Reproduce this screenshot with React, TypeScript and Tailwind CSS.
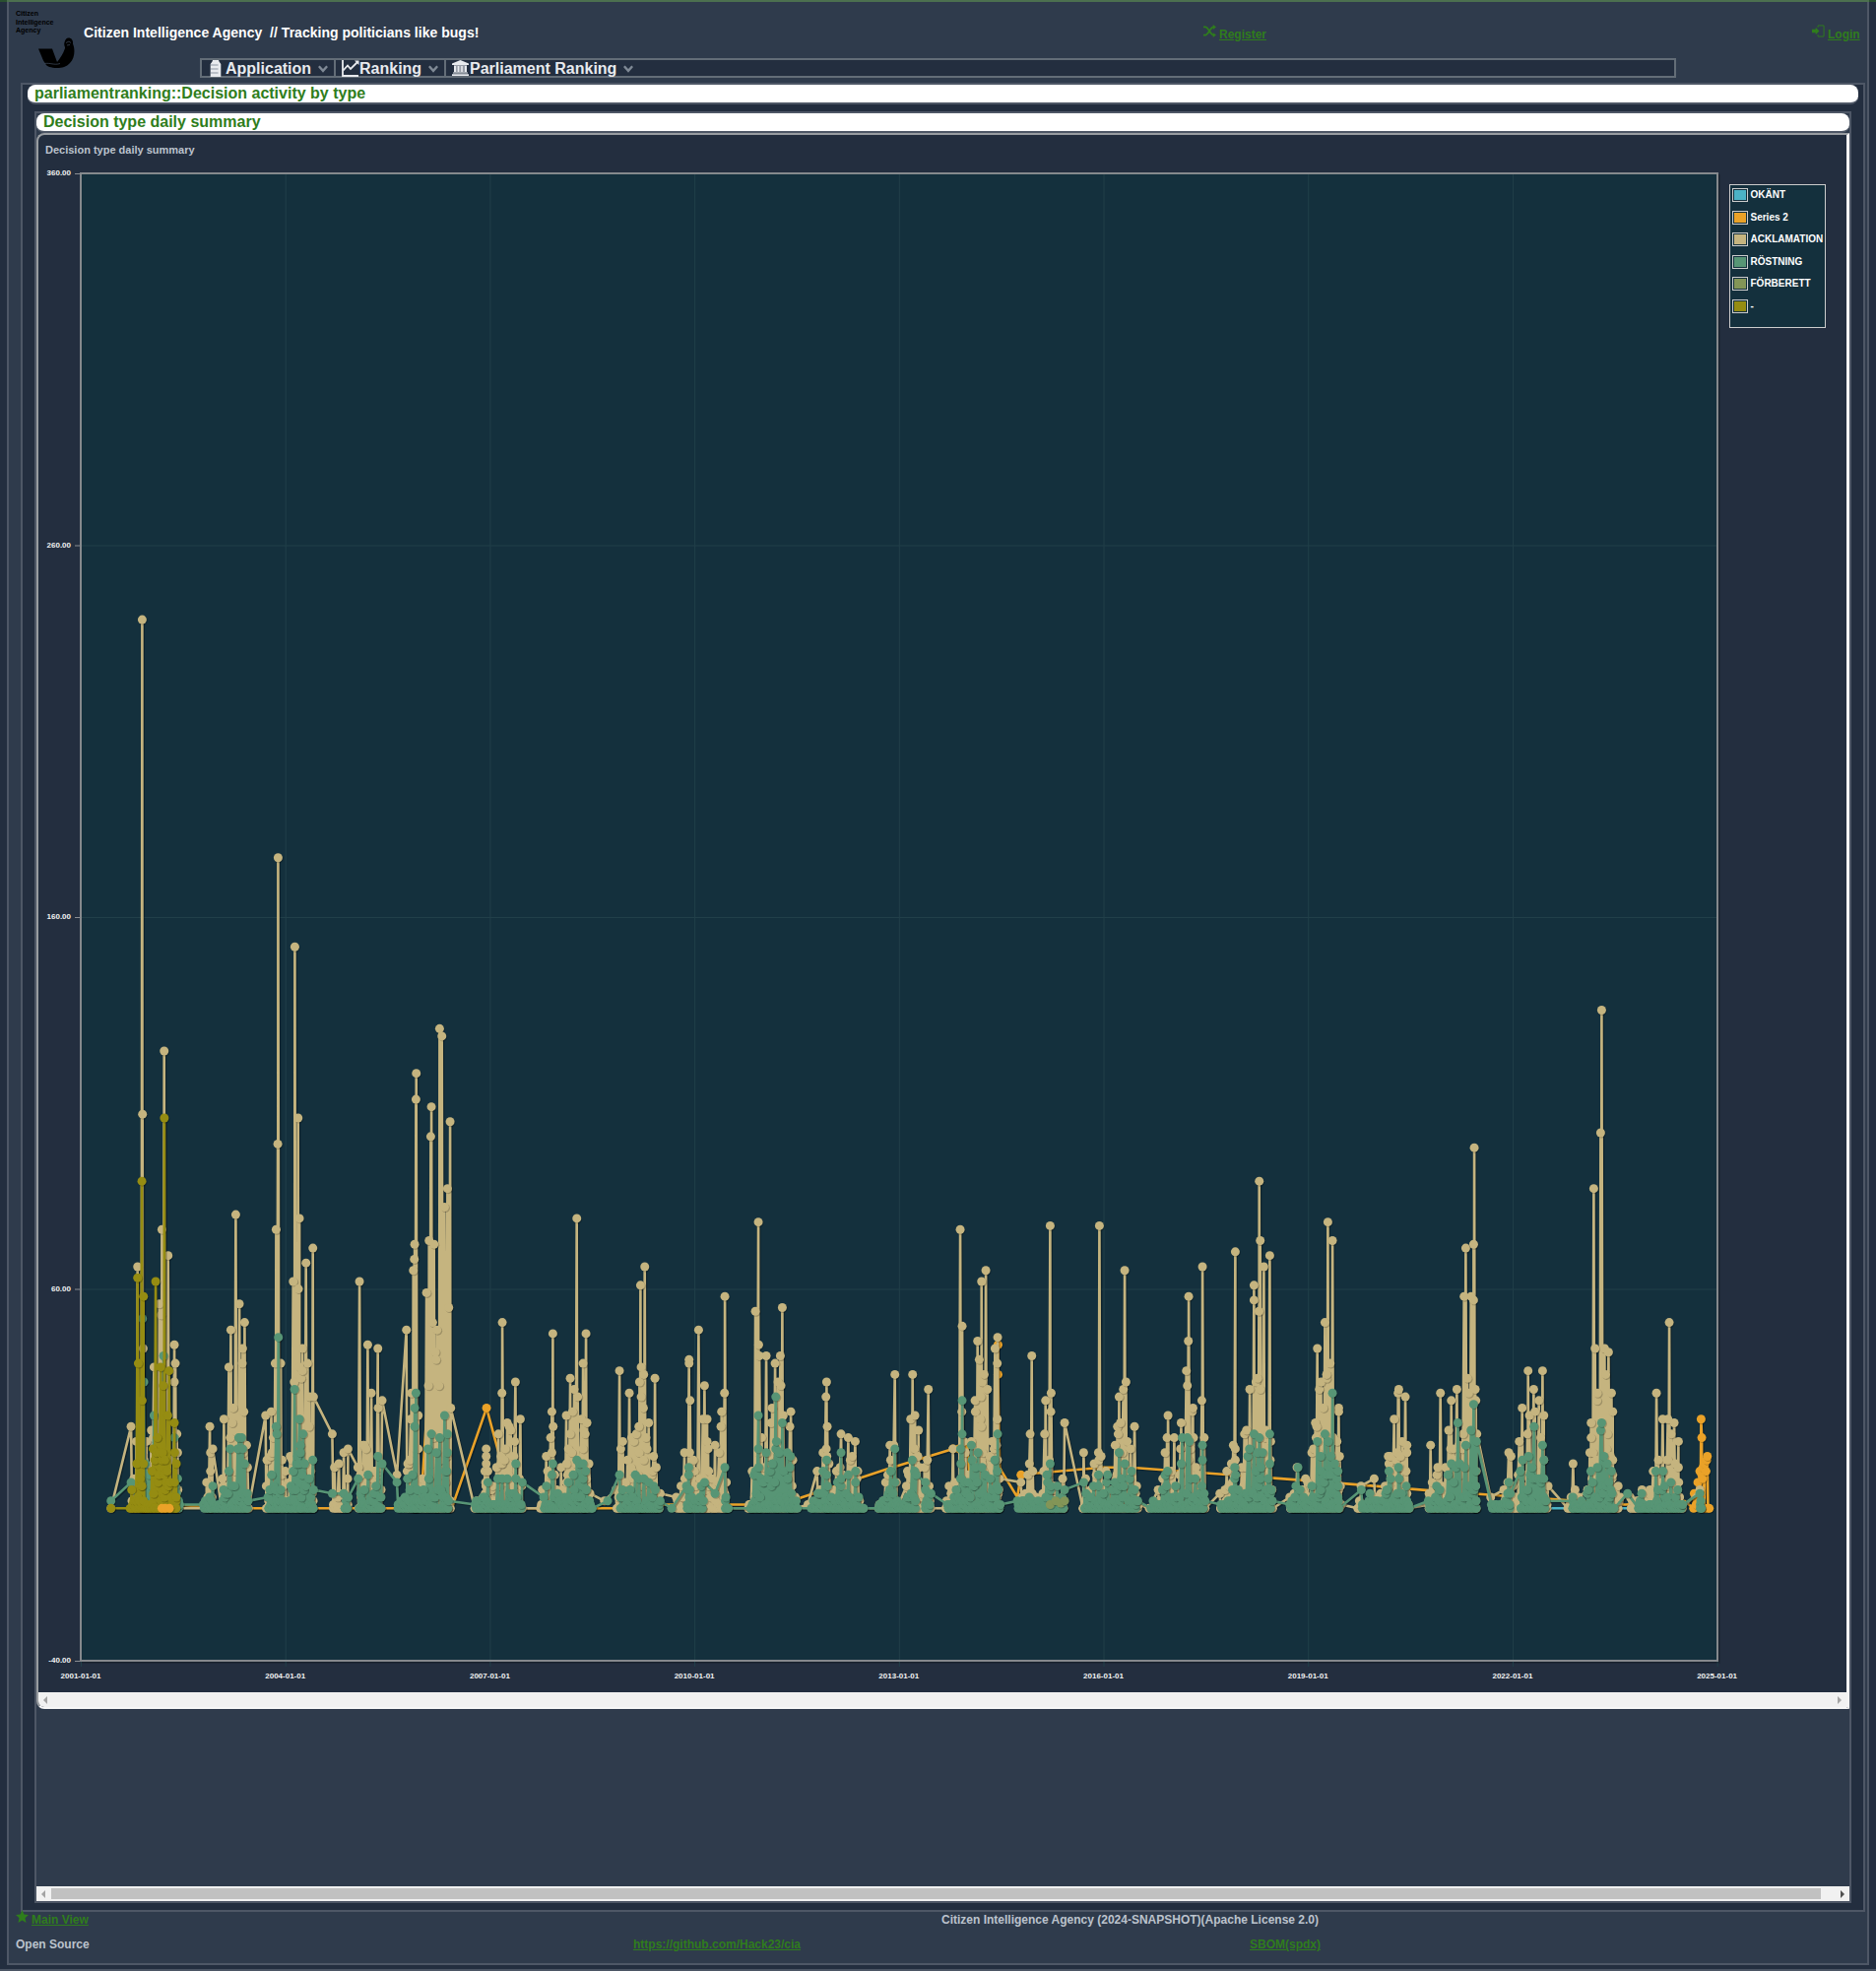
import React from "react";

type Point = [number, number];

// Points are "x,value" pairs; x is measured in thirds of a pixel from the block's offset.
const read = (blocks: [number, string][]): Point[] =>
  blocks
    .flatMap(([offset, text]) =>
      text
        .trim()
        .split(/\s+/)
        .map((pair): Point => {
          const [x, v] = pair.split(",").map(Number);
          return [offset + x, v];
        })
    )
    .sort((a, b) => a[0] - b[0]);

const acclamation = read([
  [0, "97,1 158,23 172,1 178,66 186,1 192,240 193,107 195,44 205,19 212,1 220,22 228,39 244,56 250,53 252,76 259,124 265,1 271,69 280,1 290,45 293,40 290,35 298,21 300,16 302,1 385,1 398,23 400,16 407,17 400,11 434,1 441,25 456,39 462,49 469,28 466,24 477,80 488,56 497,40 498,44 502,27 504,51 516,1 568,26 574,1 585,27 583,15 597,40 600,76 606,176 605,99 614,40 618,14 628,11 636,1 643,15 652,62 655,35 657,152 667,106 668,60 671,79 672,39 676,36 680,44 680,38 691,67 696,40 700,23 702,31 708,1 712,71 714,31 771,21 791,13 800,1 806,16 819,17 818,9 849,12 854,62 868,18 879,45 890,32 898,1 910,44 911,28 923,30 968,10 997,49 1001,13 1010,25 1012,32 1018,65 1021,68 1022,72 1026,111 1027,118 1033,26 1033,17 1048,1 1058,59 1064,34 1066,73 1071,101 1073,109 1077,51 1081,72 1085,43 1087,41 1090,49 1096,34 1098,130 1105,128 1113,82 1122,87 1126,55 1130,105 1132,28"],
  [1200, "5,1 22,1 40,17 40,15 40,13 36,11 45,11 38,8 66,1 77,21 88,32 89,51 85,15 85,13 98,17 104,24 110,23 115,22 122,1 129,35 136,1 144,25 150,1 205,1 223,15 227,11 236,20 240,27 243,48 244,23 240,16 249,10 258,1 284,26 285,13 296,36 296,21 303,27 308,33 316,79 319,31 330,25 335,40 337,22 335,17 344,48 347,24 356,5 400,3 435,6 446,38 450,17 456,19 465,8 476,32 483,20 490,19 497,21 505,23 506,16 507,35 510,61 512,39 512,31 519,28 520,37 523,66 527,20 530,17 535,24 550,15 554,36 558,12 570,5 619,4 644,16 645,9 658,41 658,40 661,30 660,16 668,1 687,49 700,25 705,34 713,25 713,19 716,17 718,11 727,9 737,18 740,7 749,16 755,23 757,27 766,32 767,58 774,1 838,1 850,11 860,54 869,78 870,45 872,42 893,42 908,24 911,28 920,40 929,35 938,34 936,42 942,55 945,26 965,23 968,27 974,14 984,1 1020,2 1048,11 1066,16 1075,31 1077,35 1079,23 1076,17 1090,1 1107,11 1121,21 1132,1 1143,20 1149,14 1155,15 1164,19 1172,11 1180,1"],
  [2400, "35,1 50,3 70,18 72,14 85,37 92,1 120,7 133,25 139,37 146,26 157,22 145,17 155,15 160,12 172,1 187,33 194,1 240,1 250,7 262,17 273,1 284,76 290,50 289,27 300,16 318,19 329,30 330,27 337,46 342,41 345,25 347,31 348,23 349,62 351,35 357,37 362,65 367,33 375,15 381,19 390,44 397,40 398,47 397,25 404,9 469,8 490,10 497,21 502,42 505,11 515,4 533,1 541,21 544,30 558,77 561,32 560,27 570,7 590,1 602,24 658,1 660,16 672,1 692,13 705,16 708,77 716,1 728,11 745,1 756,18 763,23 765,21 768,31 772,24 781,33 785,65 789,35 793,19 803,17 815,23 828,2 860,1 887,6 908,16 914,20 917,26 925,1 936,20 940,7 957,24 955,17 973,38 976,34 979,46 980,58 991,27 993,28 995,20 1002,12 1020,30 1022,66 1030,1 1075,5 1085,1 1096,11 1110,13 1122,70 1122,17 1122,14 1136,1 1150,21 1156,22 1166,33 1179,61 1179,57 1185,35 1190,36 1194,54 1195,89 1198,33 1198,73 1209,66 1215,22 1227,69 1230,19 1236,1"],
  [3600, "88,4 98,1 110,12 120,1 136,9 155,16 160,17 166,24 172,44 178,33 183,35 190,28 195,51 200,36 200,37 204,78 211,40 218,73 232,19 237,28 237,27 245,2 295,1 305,7 345,9 365,5 388,15 394,15 390,13 406,25 415,16 418,32 420,33 430,19 440,31 445,18 445,16 452,1 510,2 517,18 524,1 536,10 547,32 556,1 572,22 578,17 580,30 589,1 597,33 610,1 619,58 624,71 629,36 633,32 640,58 648,57 648,72 650,98 653,33 655,30 658,21 700,4 740,6 755,16 762,15 774,1 787,19 796,28 806,1 814,38 812,21 818,26 831,33 835,27 847,30 852,20 858,38 862,26 862,14 875,7 935,1 951,13 960,1 968,4 995,6 1002,16 1006,24 1006,20 1014,87 1018,44 1025,32 1024,30 1035,102 1038,135 1047,44 1050,37 1059,43 1068,32 1072,27 1072,14 1095,4 1125,4 1140,1 1161,6 1172,1 1195,11 1205,32 1214,1 1224,25 1232,1 1240,25 1244,51 1240,14 1250,21 1259,24 1272,19 1272,12 1273,8 1284,1 1337,6"],
]);

const vote = read([
  [0, "97,3 158,8 186,1 193,52 197,35 205,1 228,26 240,8 257,42 275,8 290,20 300,9 306,2 378,2 390,1 407,7 412,1 432,1 440,6 456,11 460,17 466,7 486,20 495,20 483,17 498,17 504,13 515,3 575,4 586,10 600,23 602,21 607,47 614,6 640,3 645,7 652,11 656,33 671,25 682,21 674,18 674,16 665,15 687,13 700,9 712,14 714,6 771,5 806,5 820,4 850,9 868,6 880,10 898,5 910,15 923,13 968,8 985,1 1000,9 1015,10 1022,28 1026,32 1022,23 1030,6 1046,5 1062,17 1073,21 1098,20 1088,16 1113,26 1122,21 1122,16 1115,11 1125,3 1206,2"],
  [1200, "20,2 45,8 56,1 75,9 88,9 104,9 118,4 130,13 130,9 150,8 215,4 223,7 243,13 240,10 265,3 290,8 305,10 316,14 325,13 335,13 343,11 335,9 345,6 355,3 363,1 410,3 446,10 455,6 470,4 494,10 505,9 520,9 535,8 550,7 555,6 570,3 605,1 650,7 657,12 657,10 660,6 670,2 705,8 695,7 737,5 767,12 770,4 778,1 845,1 856,10 860,11 869,26 869,17 870,12 893,16 905,11 922,31 924,19 922,17 932,16 942,24 957,16 967,15 965,12 958,9 970,5 988,1 1030,1 1050,5 1066,11 1077,14 1077,10 1080,7 1095,1 1110,8 1121,16 1121,9 1143,10 1165,11 1165,8 1175,4 1190,1"],
  [2400, "35,1 55,2 72,11 85,17 85,8 80,5 100,1 120,3 138,14 145,11 150,10 178,8 178,6 195,5 245,2 265,4 285,17 290,30 290,21 286,13 285,9 300,3 318,18 338,16 320,14 330,12 350,12 360,10 375,9 389,14 398,21 397,11 395,7 400,6 406,2 458,3 469,2 494,4 515,2 535,1 548,10 558,13 550,8 560,7 580,7 602,6 660,8 685,1 690,7 705,10 705,7 733,10 730,8 755,8 768,16 785,13 775,9 806,11 800,9 815,6 825,3 865,1 885,2 908,10 915,11 912,7 940,7 957,13 960,20 976,20 982,19 985,9 1000,9 1022,18 1022,14 1020,7 1030,3 1078,2 1100,3 1120,12 1120,9 1123,10 1138,3 1160,15 1165,17 1179,21 1195,20 1190,16 1205,16 1200,12 1227,21 1227,13 1222,9 1235,3"],
  [3600, "88,2 100,1 113,12 119,6 130,4 140,1 155,7 172,19 182,15 183,11 195,21 205,19 200,10 213,15 218,32 235,11 235,7 238,1 306,6 315,1 332,5 350,3 370,3 390,11 395,9 419,12 421,9 415,5 443,7 445,3 452,1 510,3 535,7 545,6 570,10 580,13 600,24 605,13 624,18 620,12 640,22 648,29 657,19 655,11 655,7 702,2 720,1 745,3 755,8 760,5 790,11 797,14 815,15 832,23 820,10 847,9 858,18 862,14 862,9 868,3 950,3 950,4 970,2 990,1 1005,11 1010,8 1025,12 1035,22 1038,24 1045,15 1055,13 1068,11 1060,8 1070,5 1076,1 1117,5 1150,1 1160,5 1155,3 1172,1 1195,1 1203,11 1215,1 1225,11 1230,7 1249,8 1270,6 1285,2 1337,5 1340,3 1342,1"],
]);

const unnamed = read([
  [0, "97,1 155,1 160,6 170,1 178,63 180,40 186,9 191,89 192,30 196,58 196,13 201,1 215,2 222,11 225,17 228,1 233,62 238,20 240,8 248,39 252,14 254,16 256,34 258,10 259.5,106 262,6 270,26 274,38 280,4 290,24 291,16 296,13 295,3"],
]);

const seriesTwo: Point[] = read([
  [0, "245,1 262,1 275,1 300,2 420,1 1040,1 1068,39 1090,22 1120,1 1135,1 1241,28"],
  [1200, "90,12 120,1 440,1 570,2 850,2 985,3.5 1258,11.5"],
  [2400, "262,17 280,17 305,18 318,1 390,1 399,45 399,37 404,12 410,11 458,4 469,10 520,10.5 720,12 800,12 1260,9"],
  [3600, "150,8.4 530,5.7 880,3.5 1110,2 1290,3 1318,1 1320,5 1326,2 1331,8 1335,4 1337,11 1339,1 1341,25 1343,20 1345,9 1347,12 1343,10 1351,1 1352,13 1356,11 1358,14 1360,15 1362,1 1366,1"],
]);

const prepared: Point[] = [[2958, 2], [2975, 3], [2990, 2.4], [3002, 3]];
const unknown: Point[] = [[4425, 1], [4730, 1]];

function densify(points: Point[], step: number, ratio: number, cap: number, maxGap: number, seed: number): Point[] {
  let s = seed;
  const rnd = () => {
    s = (s * 1103515245 + 12345) % 2147483648;
    return s / 2147483648;
  };
  const out: Point[] = [];
  points.forEach((p, i) => {
    out.push(p);
    const next = points[i + 1];
    if (!next) return;
    const gap = next[0] - p[0];
    if (gap > maxGap) return;
    const n = Math.max(1, Math.round(gap / step));
    const top = Math.max(2, Math.min(cap, Math.max(p[1], next[1]) * ratio));
    for (let k = 1; k <= n; k++) {
      const x = p[0] + (gap * k) / (n + 1);
      out.push([x, k % 2 ? 1 : Math.round(1 + rnd() * top)]);
      if (k % 2) out.push([x, Math.round(1 + rnd() * rnd() * top)]);
    }
  });
  return out;
}

const px = (x: number) => 80.4 + x / 3 - 39;
const py = (v: number) => 1535.1 - v * 3.775 - 137;

function Series({ points, color, marks }: { points: Point[]; color: string; marks?: Point[] }) {
  const d = points.map(([x, v]) => `${px(x).toFixed(1)},${py(v).toFixed(1)}`).join(" ");
  return (
    <g>
      <polyline points={d} fill="none" stroke="#000" strokeOpacity="0.28" strokeWidth="2.5" strokeLinejoin="round" transform="translate(1.3 1.3)" />
      <polyline points={d} fill="none" stroke={color} strokeWidth="2.6" strokeLinejoin="round" />
      {(marks ?? points).map(([x, v], i) => (
        <g key={i}>
          <circle cx={px(x) + 1} cy={py(v) + 1} r="4.5" fill="#000" fillOpacity="0.2" />
          <circle cx={px(x)} cy={py(v)} r="4.5" fill={color} />
        </g>
      ))}
    </g>
  );
}

const years = ["2001", "2004", "2007", "2010", "2013", "2016", "2019", "2022", "2025"];
const levels = ["360.00", "260.00", "160.00", "60.00", "-40.00"];

function Chart() {
  return (
    <svg width="1836" height="1581" className="block" fontFamily="Liberation Sans, Arial, sans-serif" fontWeight="bold" fontSize="8">
      <rect x="44" y="40" width="1664" height="1512" fill="#000" fillOpacity="0.12" />
      <rect x="43" y="40" width="1664" height="1511" fill="#000" fillOpacity="0.15" />
      <rect x="43" y="39" width="1662" height="1510" fill="#14303d" />
      {years.map((y, i) => {
        const x = 43.5 + i * 207.7;
        return (
          <g key={y}>
            <line x1={x} x2={x} y1="40" y2="1555" stroke="#213f49" />
            <text x={x - 0.5} y="1567" fill="#f2f2f2" textAnchor="middle">{y}-01-01</text>
          </g>
        );
      })}
      {levels.map((l, i) => {
        const y = 39 + i * 377.5;
        return (
          <g key={l}>
            <line x1="43" x2="1705" y1={y + 0.5} y2={y + 0.5} stroke="#213f49" />
            <line x1="37" x2="43" y1={y + 0.5} y2={y + 0.5} stroke="#8b8e93" />
            <text x="33" y={y + 2} fill="#f2f2f2" textAnchor="end">{l}</text>
          </g>
        );
      })}
      <rect x="43" y="39" width="1662" height="1510" fill="none" stroke="#85898d" strokeWidth="2" />
      <Series points={unknown} color="#4bb2c5" />
      <Series points={seriesTwo} color="#eaa228" marks={seriesTwo.filter(([x, v]) => x > 4910 || v >= 17 || (x < 300 && v < 2) || x === 2869)} />
      <Series points={densify(acclamation, 4, 0.55, 22, 26, 7)} color="#c5b47f" />
      <Series points={densify(vote, 4.4, 0.5, 13, 26, 21)} color="#579575" />
      <Series points={prepared} color="#839557" />
      <Series points={densify(unnamed, 5, 0.45, 30, 16, 5)} color="#958c12" />
      <Series points={[[252, 1], [262, 1], [275, 1]]} color="#eaa228" />
    </svg>
  );
}

const legend: [string, string][] = [
  ["OKÄNT", "bg-[#4bb2c5]"],
  ["Series 2", "bg-[#eaa228]"],
  ["ACKLAMATION", "bg-[#c5b47f]"],
  ["RÖSTNING", "bg-[#579575]"],
  ["FÖRBERETT", "bg-[#839557]"],
  ["-", "bg-[#958c12]"],
];

function Legend() {
  return (
    <div className="absolute left-[1717px] top-[50px] h-[146px] w-[98px] border border-[#cccccc] bg-[#14303d] pt-[3px] pl-[2px]">
      {legend.map(([name, color]) => (
        <div key={name} className="flex h-[22.6px] items-start gap-[2.5px]">
          <div className="h-[14px] w-4 shrink-0 border border-[#cccccc] p-px">
            <div className={`h-full w-full ${color}`} />
          </div>
          <span className="text-[10px] leading-[13px] text-white">{name}</span>
        </div>
      ))}
    </div>
  );
}

function Logo() {
  return (
    <div className="w-[76px] pt-2 pl-[7px] text-[7px] leading-[8.5px] text-black">
      <div>Citizen</div>
      <div>Intelligence</div>
      <div>Agency</div>
      <svg width="38" height="32" viewBox="0 0 38 32" className="mt-[1px] ml-[22px]">
        <path d="M1 12.500h14L20 26c3-4 6-8 8-14 .5-1.500-1.500-3-.5-6C28.300 3.500 29 2 31 1.500c3.500-.5 5.500 2.500 5 6C38.500 13 38 22 33 27c-3.500 3.800-8 5-13 5-6 0-11-1.500-12-4.500l-2-3z" fill="#000" />
        <path d="M29 6.500l3-1.500 2 1.500M30 9l3-.5M7 27.500c6-1 10 2 16 0" stroke="#3a4453" strokeWidth=".8" fill="none" />
      </svg>
    </div>
  );
}

function BarrelIcon() {
  return (
    <svg width="12" height="17" viewBox="0 0 12 17" className="shrink-0">
      <path d="M3 0h6l.5 1.500L11.300 4v13H.7V4L2.500 1.500z" fill="#e8eaee" />
      <path d="M1 5h7.500M1 9h7.500M1 13h7.500" stroke="#8c95a2" strokeWidth="1" />
    </svg>
  );
}

function LineIcon() {
  return (
    <svg width="18" height="17" viewBox="0 0 18 17" className="shrink-0" fill="none" stroke="#e8eaee">
      <path d="M1 0v16h16" strokeWidth="1.800" />
      <path d="M1.500 10.500l4.500-5 3 3.500 7.500-7.500" strokeWidth="1.800" />
      <path d="M13 .5h4.500V5z" fill="#e8eaee" stroke="none" />
    </svg>
  );
}

function InstitutionIcon() {
  return (
    <svg width="17" height="16" viewBox="0 0 17 16" className="shrink-0" fill="#e8eaee">
      <path d="M8.500 0L17 3.500V5H0V3.500zM1 12.500h15v1H1zM0 14.200h17V16H0zM2 6h2v6H2zM5.700 6h1.600v6H5.700zM9.200 6h1.600v6H9.200zM13 6h2v6h-2z" />
      <path d="M2 5h13v7.500H2z" fillOpacity=".6" />
    </svg>
  );
}

function Chevron() {
  return (
    <svg width="10" height="8" viewBox="0 0 10 8" className="mt-px shrink-0" fill="none" stroke="#7f8995" strokeWidth="2.400">
      <path d="M.8 1.200L5 5.900l4.200-4.700" />
    </svg>
  );
}

function ShuffleIcon() {
  return (
    <svg width="13" height="13" viewBox="0 0 16 16" fill="none" stroke="#2f7d1c" strokeWidth="2.200">
      <path d="M0 3h2.500c3.500 0 6.500 10 10 10H13M0 13h2.500C6 13 9 3 12.500 3H13" />
      <path d="M12 0l4 3-4 3zM12 10l4 3-4 3z" fill="#2f7d1c" stroke="none" />
    </svg>
  );
}

function LoginIcon() {
  return (
    <svg width="13" height="13" viewBox="0 0 14 13">
      <path d="M6.500 .5h6.500v12H6.500M6.500 .5v2M6.500 10.500v2" fill="none" stroke="#2f7d1c" />
      <path d="M0 4.500h4V2.500l4 4-4 4V8.500H0z" fill="#2f7d1c" />
    </svg>
  );
}

function StarIcon() {
  return (
    <svg width="13" height="13" viewBox="0 0 16 16" fill="#2f7d1c" className="-mt-[3px]">
      <path d="M8 0l2.300 5.500 5.700.6-4.300 3.900L13 16l-5-3.200L3 16l1.300-6L0 6.100l5.700-.6z" />
    </svg>
  );
}

function Arrow({ right, dark }: { right?: boolean; dark?: boolean }) {
  return (
    <svg width="4" height="8" viewBox="0 0 4 8" fill={dark ? "#505050" : "#a3a3a3"}>
      <path d={right ? "M0 0l4 4-4 4z" : "M4 0L0 4l4 4z"} />
    </svg>
  );
}

export default function App() {
  return (
    <div className="flex h-[2001px] w-[1905px] flex-col overflow-hidden border-b-2 border-[#4b5564] bg-[#232e3f] font-['Liberation_Sans',Arial,sans-serif] font-bold">
      <div className="h-[2px] shrink-0 bg-[#2a5130] px-[7px]">
        <div className="h-full w-[1891px] bg-[#4c704f]" />
      </div>
      <div className="ml-[7px] h-[1993px] w-[1891px] border-x-2 border-b-2 border-[#4e5766] bg-[#2f3b4c]">
        <header className="flex h-[82px]">
          <Logo />
          <div className="flex-1">
            <div className="flex h-[57px] pt-[23px]">
              <div className="w-[1137px] text-sm leading-[17px] tracking-[0.02px] whitespace-pre text-white">Citizen Intelligence Agency  // Tracking politicians like bugs!</div>
              <div className="flex h-[17px] w-[618px] gap-[3px] text-xs leading-[20px] text-[#2f7d1c]">
                <ShuffleIcon />
                <a className="underline">Register</a>
              </div>
              <div className="flex h-[17px] gap-[3px] text-xs leading-[20px] text-[#2f7d1c]">
                <LoginIcon />
                <a className="underline">Login</a>
              </div>
            </div>
            <nav className="ml-[118px] flex h-5 w-[1499px] border-2 border-[#636d77] bg-[#232e3f] text-base leading-[20px] text-[#e8eaee]">
              <div className="flex w-[136px] items-center border-r-2 border-[#636d77] pl-[8px]">
                <BarrelIcon />
                <span className="mt-px mr-[7px] ml-[4px]">Application</span>
                <Chevron />
              </div>
              <div className="flex w-[112px] items-center border-r-2 border-[#636d77] pl-[6px]">
                <LineIcon />
                <span className="mt-px mr-[7px]">Ranking</span>
                <Chevron />
              </div>
              <div className="flex items-center pl-[6px]">
                <InstitutionIcon />
                <span className="mt-px mr-[7px] ml-[1px] whitespace-nowrap">Parliament Ranking</span>
                <Chevron />
              </div>
            </nav>
          </div>
        </header>

        <main className="ml-[12px] h-[1857px] w-[1873px] border-2 border-[#4e5766] bg-[#232e3f]">
          <h1 className="ml-[5px] h-5 w-[1859px] rounded-lg border-b-2 border-[#4e5766] bg-white pl-[7px] text-base leading-[18px] text-[#2f7d1c]">parliamentranking::Decision activity by type</h1>
          <section className="mt-[7px] ml-[12px] h-[1819px] w-[1845px] border-2 border-[#4e5766] bg-[#2f3b4c]">
            <h2 className="h-5 rounded-lg border-b-2 border-[#4e5766] bg-white pl-[7px] text-base leading-[18px] text-[#2f7d1c]">Decision type daily summary</h2>
            <div className="relative h-[1600px] w-[1841px] overflow-hidden rounded-tl-lg rounded-bl-lg border-y-2 border-r-3 border-l-2 border-t-[#999da1] border-r-[#f3f3f3] border-b-[#f7f7f7] border-l-[#999da1] bg-[#232e3f]">
              <div className="absolute top-[9px] left-[7px] text-[11px] leading-[13px] text-[#bcc3cd]">Decision type daily summary</div>
              <Chart />
              <Legend />
              <div className="flex h-[15px] items-center justify-between bg-[#f1f1f1] px-[5px]">
                <Arrow />
                <Arrow right />
              </div>
            </div>
            <div className="mt-[180px] flex h-[15px] items-center bg-[#f1f1f1] px-[5px]">
              <Arrow />
              <div className="mr-[20px] ml-[6px] h-[11px] flex-1 bg-[#c1c1c1]" />
              <Arrow right dark />
            </div>
          </section>
        </main>

        <footer className="pl-[7px] text-xs leading-[14px] text-[#bcc3cd]">
          <div className="flex h-[26px] pt-[1px]">
            <StarIcon />
            <a className="ml-[3px] w-[924px] text-[#2f7d1c] underline">Main View</a>
            <span>Citizen Intelligence Agency (2024-SNAPSHOT)(Apache License 2.0)</span>
          </div>
          <div className="flex">
            <span className="w-[627px]">Open Source</span>
            <a className="w-[626px] text-[#2f7d1c] underline">https://github.com/Hack23/cia</a>
            <a className="text-[#2f7d1c] underline">SBOM(spdx)</a>
          </div>
        </footer>
      </div>
    </div>
  );
}
